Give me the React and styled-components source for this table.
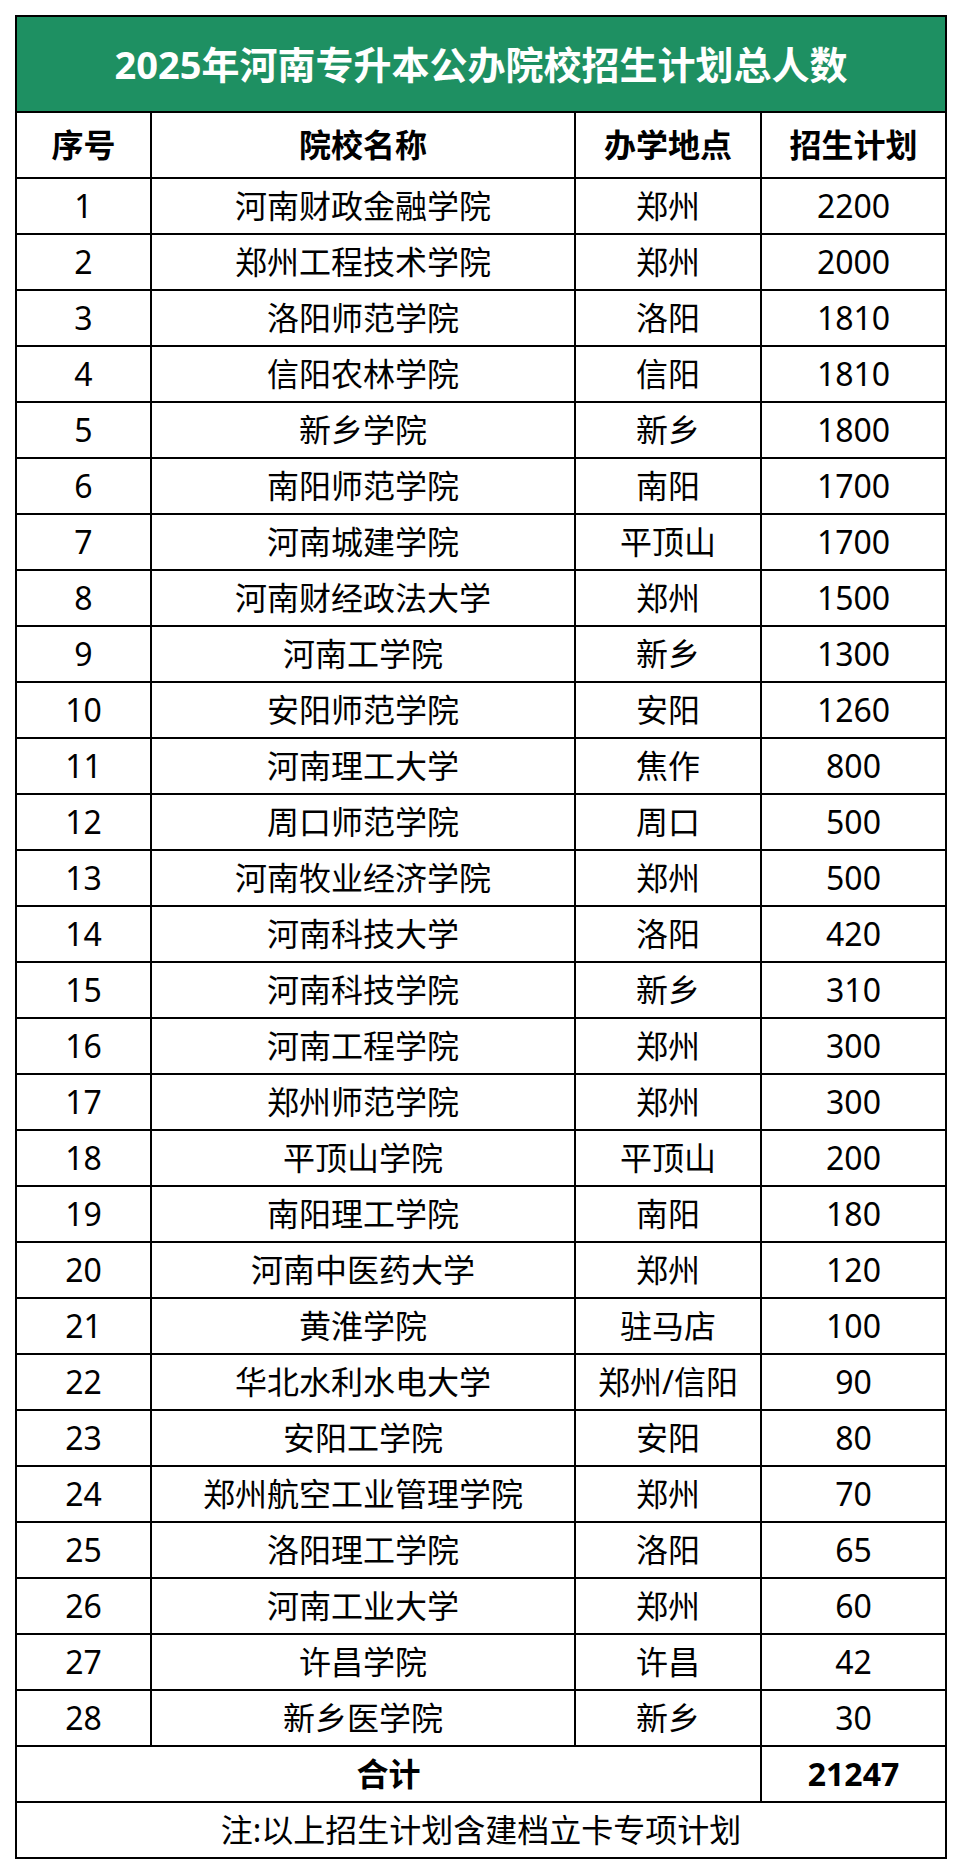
import React from "react";
import styled, { createGlobalStyle } from "styled-components";

const GlobalStyle = createGlobalStyle`
  html, body {
    margin: 0;
    padding: 0;
    background: #ffffff;
  }
  body {
    font-family: "Noto Sans", "Noto Sans CJK SC", sans-serif;
  }
`;

const Page = styled.div`
  padding: 15px 0 0 15px;
`;

const Sheet = styled.div`
  width: 932px;
  box-sizing: border-box;
  display: grid;
  grid-template-columns: 133px 422px 184px 183px;
  grid-template-rows: 94px 64px;
  grid-auto-rows: 54px;
  gap: 2px;
  padding: 2px;
  background: #000000;
`;

const Title = styled.div`
  grid-column: 1 / -1;
  background: #1e9062;
  color: #ffffff;
  font-size: 38px;
  font-weight: 700;
  display: flex;
  align-items: center;
  justify-content: center;
  line-height: 1;
`;

const Cell = styled.div`
  grid-column: ${(p) => (p.$span ? `span ${p.$span}` : "auto")};
  background: #ffffff;
  color: #000000;
  font-size: 32px;
  font-weight: ${(p) => (p.$bold ? 700 : 400)};
  display: flex;
  align-items: center;
  justify-content: center;
  line-height: 1;
  white-space: nowrap;
`;

const rows = [
  ["河南财政金融学院", "郑州", 2200],
  ["郑州工程技术学院", "郑州", 2000],
  ["洛阳师范学院", "洛阳", 1810],
  ["信阳农林学院", "信阳", 1810],
  ["新乡学院", "新乡", 1800],
  ["南阳师范学院", "南阳", 1700],
  ["河南城建学院", "平顶山", 1700],
  ["河南财经政法大学", "郑州", 1500],
  ["河南工学院", "新乡", 1300],
  ["安阳师范学院", "安阳", 1260],
  ["河南理工大学", "焦作", 800],
  ["周口师范学院", "周口", 500],
  ["河南牧业经济学院", "郑州", 500],
  ["河南科技大学", "洛阳", 420],
  ["河南科技学院", "新乡", 310],
  ["河南工程学院", "郑州", 300],
  ["郑州师范学院", "郑州", 300],
  ["平顶山学院", "平顶山", 200],
  ["南阳理工学院", "南阳", 180],
  ["河南中医药大学", "郑州", 120],
  ["黄淮学院", "驻马店", 100],
  ["华北水利水电大学", "郑州/信阳", 90],
  ["安阳工学院", "安阳", 80],
  ["郑州航空工业管理学院", "郑州", 70],
  ["洛阳理工学院", "洛阳", 65],
  ["河南工业大学", "郑州", 60],
  ["许昌学院", "许昌", 42],
  ["新乡医学院", "新乡", 30],
];

const total = rows.reduce((sum, r) => sum + r[2], 0);

export default function App() {
  return (
    <Page>
      <GlobalStyle />
      <Sheet>
        <Title>2025年河南专升本公办院校招生计划总人数</Title>
        <Cell $bold>序号</Cell>
        <Cell $bold>院校名称</Cell>
        <Cell $bold>办学地点</Cell>
        <Cell $bold>招生计划</Cell>
        {rows.map(([name, place, num], i) => (
          <React.Fragment key={name}>
            <Cell>{i + 1}</Cell>
            <Cell>{name}</Cell>
            <Cell>{place}</Cell>
            <Cell>{num}</Cell>
          </React.Fragment>
        ))}
        <Cell $bold $span={3}>合计</Cell>
        <Cell $bold>{total}</Cell>
        <Cell $span={4}>注:以上招生计划含建档立卡专项计划</Cell>
      </Sheet>
    </Page>
  );
}
